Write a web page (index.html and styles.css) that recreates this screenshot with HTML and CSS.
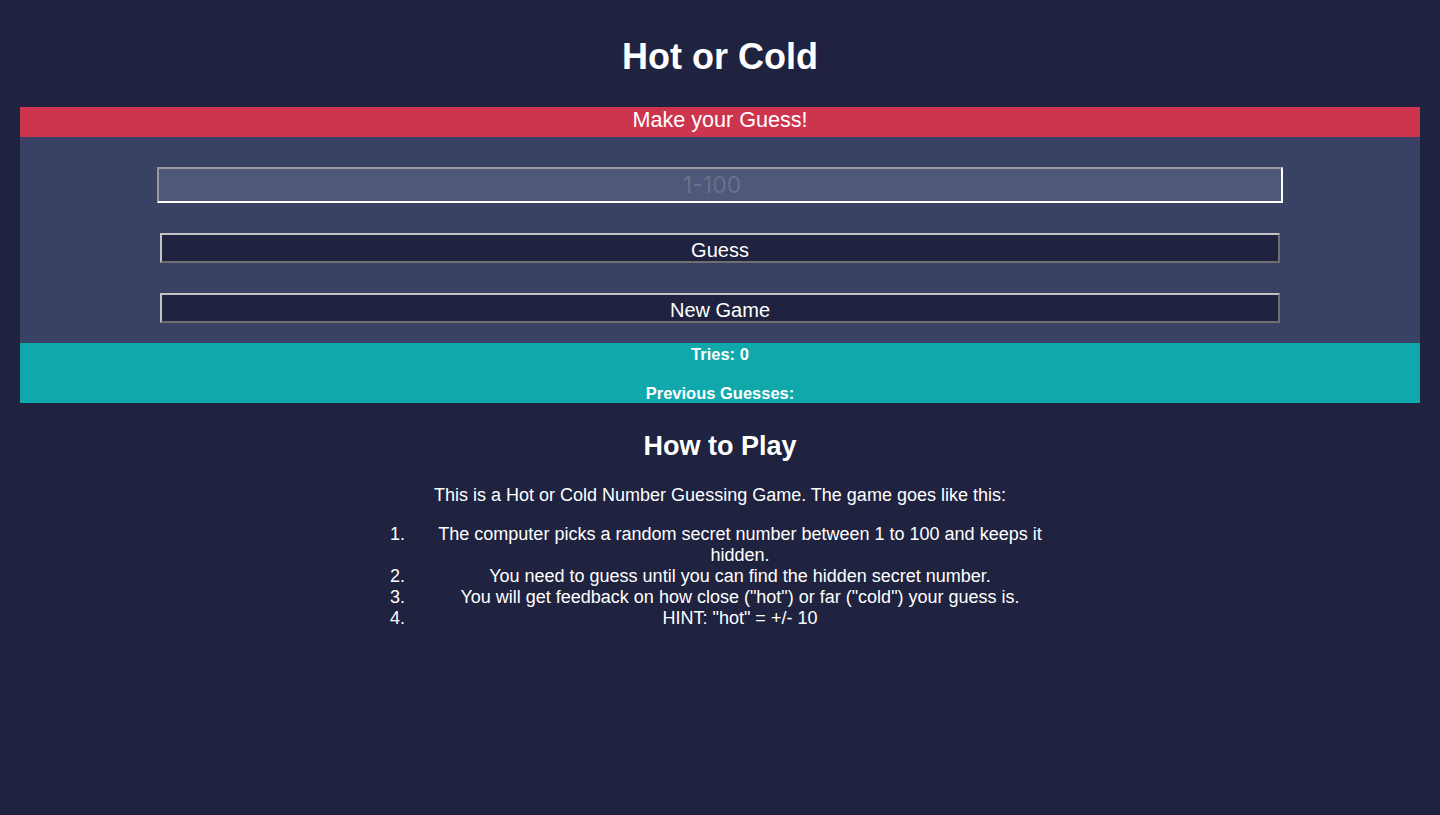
FILE: index.html
```html
<!DOCTYPE html>
<html>
<head>
<meta charset="utf-8">
<title>Hot or Cold</title>
<link rel="stylesheet" href="styles.css">
</head>
<body>
<div class="page">
  <h1 class="title">Hot or Cold</h1>
  <div class="guess-bar">Make your Guess!</div>
  <form class="game-form">
    <input class="guess-input" type="text" placeholder="1-100">
    <button class="btn" type="button">Guess</button>
    <button class="btn" type="button">New Game</button>
  </form>
  <div class="stats">
    <p class="stat">Tries: 0</p>
    <p class="stat">Previous Guesses:</p>
  </div>
  <section class="howto">
    <h2 class="howto-title">How to Play</h2>
    <p class="intro">This is a Hot or Cold Number Guessing Game. The game goes like this:</p>
    <ol class="steps">
      <li>The computer picks a random secret number between 1 to 100 and keeps it hidden.</li>
      <li>You need to guess until you can find the hidden secret number.</li>
      <li>You will get feedback on how close ("hot") or far ("cold") your guess is.</li>
      <li>HINT: "hot" = +/- 10</li>
    </ol>
  </section>
</div>
</body>
</html>
```

FILE: styles.css
```css
html, body {
  margin: 0;
  padding: 0;
  background: #1f2340;
}
body {
  font-family: "Liberation Sans", Arial, Helvetica, sans-serif;
  font-size: 18px;
  color: #ffffff;
  text-align: center;
}
.page {
  padding: 0 20px;
}
.title {
  font-size: 36px;
  line-height: 41px;
  margin: 0;
  padding: 36px 0 30px;
  font-weight: bold;
}
.guess-bar {
  background: #cd344d;
  height: 30px;
  line-height: 25px;
  font-size: 21.6px;
}
.game-form {
  background: #394165;
  margin: 0;
  padding: 30px 0 20px;
  display: flex;
  flex-direction: column;
  align-items: center;
  gap: 30px;
}
.guess-input {
  box-sizing: border-box;
  width: calc(80% + 6px);
  height: 36px;
  background: #4f577a;
  border: 2px solid;
  border-color: #9a9a9a #ffffff #ffffff #9a9a9a;
  color: #ffffff;
  font-family: Inter, "Noto Sans", sans-serif;
  font-size: 23px;
  text-align: center;
  padding: 1px 17px 1px 1px;
  outline: none;
}
.guess-input::placeholder {
  color: #6c7088;
  opacity: 1;
}
.btn {
  box-sizing: border-box;
  width: 80%;
  height: 30px;
  background: #1f2340;
  border: 2px solid;
  border-color: #c3c3c3 #6f6f6f #6f6f6f #c3c3c3;
  color: #ffffff;
  font-family: "Liberation Sans", Arial, Helvetica, sans-serif;
  font-size: 20px;
  line-height: 22px;
  padding: 4px 0 0;
}
.stats {
  background: #10a8ab;
  height: 60px;
  box-sizing: border-box;
  padding-top: 2px;
  display: flex;
  flex-direction: column;
  gap: 21px;
}
.stat {
  margin: 0;
  font-size: 16.5px;
  font-weight: bold;
  line-height: 18px;
}
.howto-title {
  font-size: 27px;
  line-height: 31px;
  margin: 28px 0 23px;
}
.intro {
  margin: 0 0 18px;
  font-size: 18px;
  line-height: 21px;
}
.steps {
  width: 50%;
  margin: 0 auto;
  padding-left: 40px;
  box-sizing: border-box;
  font-size: 18px;
  line-height: 21px;
}
```
